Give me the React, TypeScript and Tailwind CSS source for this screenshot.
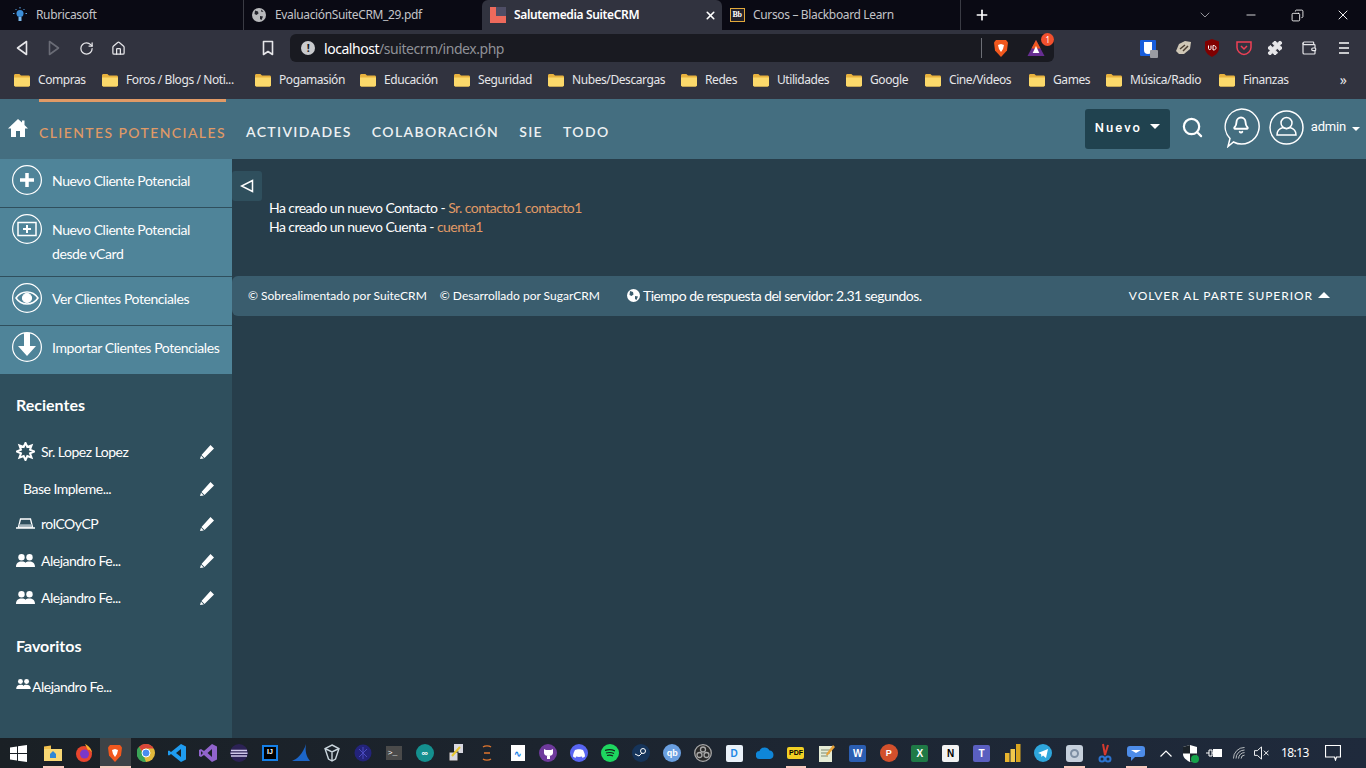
import { ChevronDown, Copy, Home, Minus, Plus, Puzzle, RotateCw, Search, Bell, Wallet, X } from 'lucide-react';
import type { ReactNode } from 'react';

const folder = (
  <svg width="16" height="16" viewBox="0 0 16 16" className="shrink-0">
    <path d="M0 3.500C0 2.700.6 2 1.400 2h4l1.600 1.600h7.600c.8 0 1.400.6 1.400 1.400v8c0 .8-.6 1.400-1.400 1.400H1.400C.6 14.400 0 13.800 0 13z" fill="#e8b23e" />
    <path d="M0 5.500h16v7.500c0 .8-.6 1.400-1.400 1.400H1.400C.6 14.400 0 13.800 0 13z" fill="#fbd96b" />
  </svg>
);

const bookmarks = [
  { name: 'Compras', w: 'w-[88px]' },
  { name: 'Foros / Blogs / Noti...', w: 'w-[153px]' },
  { name: 'Pogamasión', w: 'w-[105px]' },
  { name: 'Educación', w: 'w-[94px]' },
  { name: 'Seguridad', w: 'w-[94px]' },
  { name: 'Nubes/Descargas', w: 'w-[133px]' },
  { name: 'Redes', w: 'w-[72px]' },
  { name: 'Utilidades', w: 'w-[93px]' },
  { name: 'Google', w: 'w-[79px]' },
  { name: 'Cine/Videos', w: 'w-[104px]' },
  { name: 'Games', w: 'w-[77px]' },
  { name: 'Música/Radio', w: 'w-[113px]' },
  { name: 'Finanzas', w: 'w-[100px]' },
];

function Tab({ w, pl, icon, title, active, sep }: { w: string; pl: string; icon: ReactNode; title: string; active?: boolean; sep?: boolean }) {
  return (
    <div className={`${w} ${pl} h-[30px] flex items-center shrink-0 pr-[5px] gap-[8px] text-[12px] tracking-[-0.35px] ${active ? 'bg-[#31333f] rounded-t-[6px] text-white font-semibold' : 'text-[#c3c4c8]'} ${sep ? 'border-r border-[#3a3b44]' : ''}`}>
      <span className="w-[16px] h-[16px] flex items-center justify-center shrink-0">{icon}</span>
      <span className="flex-1 truncate">{title}</span>
      {active && <X size={13} strokeWidth={3} className="text-white" />}
    </div>
  );
}

function TabBar() {
  return (
    <div className="h-[30px] bg-[#0a0a14] flex items-end shrink-0 font-['Noto_Sans',sans-serif]">
      <Tab
        w="w-[244px]"
        pl="pl-[12px]"
        sep
        title="Rubricasoft"
        icon={
          <svg width="16" height="16" viewBox="0 0 16 16">
            <circle cx="8" cy="6.500" r="3.500" fill="#3d8fd8" />
            <rect x="6.500" y="10" width="3" height="4" fill="#7db8ea" />
            <path d="M8 0v1.500M2.500 6.500H1M15 6.500h-1.500M3.500 2l1 1M12.500 2l-1 1" stroke="#5aa5e6" strokeWidth="1" />
          </svg>
        }
      />
      <Tab
        w="w-[238px]"
        pl="pl-[7px]"
        title="EvaluaciónSuiteCRM_29.pdf"
        icon={
          <svg width="14" height="14" viewBox="0 0 14 14">
            <circle cx="7" cy="7" r="7" fill="#b9babd" />
            <path d="M3 2.500l3 1 .5 2-2 1.500-2-1zM8 8l3 .5-1.500 3.500-1.500-1zM9 1.500l2.500 2-2 .5z" fill="#24252d" />
          </svg>
        }
      />
      <Tab
        w="w-[240px]"
        pl="pl-[8px]"
        active
        title="Salutemedia SuiteCRM"
        icon={
          <svg width="16" height="16" viewBox="0 0 16 16">
            <rect width="16" height="16" fill="#ee6a5c" />
            <rect x="6" width="10" height="9" fill="#4f4e66" />
          </svg>
        }
      />
      <Tab
        w="w-[239px]"
        pl="pl-[7px]"
        sep
        title="Cursos – Blackboard Learn"
        icon={
          <span className="w-[15px] h-[14px] border border-[#e2a93b] bg-[#20202a] text-[8px] font-bold leading-[12px] text-center text-white font-['Liberation_Serif',serif]">Bb</span>
        }
      />
      <div className="w-[42px] h-[30px] flex items-center justify-center">
        <Plus size={16} strokeWidth={2.5} className="text-white" />
      </div>
      <div className="flex-1" />
      <div className="flex items-center h-[30px] text-white">
        <div className="w-[46px] flex justify-center"><ChevronDown size={16} strokeWidth={1} className="text-[#d8d8dc]" /></div>
        <div className="w-[46px] flex justify-center"><Minus size={14} strokeWidth={1.4} /></div>
        <div className="w-[46px] flex justify-center"><Copy size={13} strokeWidth={1.6} className="-scale-x-100" /></div>
        <div className="w-[46px] flex justify-center"><X size={16} strokeWidth={1.4} /></div>
      </div>
    </div>
  );
}

function Toolbar() {
  const ic = 'w-[32px] flex justify-center';
  return (
    <div className="h-[34px] bg-[#31333f] flex items-center shrink-0 pl-[6px] pt-[2px] text-[#e6e6e9]">
      <div className={ic}>
        <svg width="14" height="16" viewBox="0 0 14 16" fill="none" stroke="#e6e6e9" strokeWidth="1.600" strokeLinejoin="round"><path d="M11.500 1.500v13L2.500 8z" /></svg>
      </div>
      <div className={ic}>
        <svg width="14" height="16" viewBox="0 0 14 16" fill="none" stroke="#6a6c76" strokeWidth="1.600" strokeLinejoin="round"><path d="M2.500 1.500v13l9-6.500z" /></svg>
      </div>
      <div className={ic}><RotateCw size={15} strokeWidth={2} /></div>
      <div className={ic}><Home size={15} strokeWidth={2} /></div>
      <div className="w-[118px]" />
      <div className="w-[32px] flex justify-center">
        <svg width="12" height="16" viewBox="0 0 12 16" fill="none" stroke="#e6e6e9" strokeWidth="1.600" strokeLinejoin="round"><path d="M1.500 1.500h9v13L6 11.500l-4.500 3z" /></svg>
      </div>
      <div className="w-[6px]" />
      <div className="w-[764px] h-[28px] bg-[#191a21] rounded-[6px] flex items-center pl-[11px] pr-[7px] text-[14px] tracking-[-0.45px] font-['Noto_Sans',sans-serif]">
        <span className="w-[14px] h-[14px] rounded-full bg-[#c9cacd] text-[#191a21] text-[11px] font-bold leading-[14px] text-center mr-[9px]">!</span>
        <span className="text-white">localhost</span>
        <span className="text-[#8f9197]">/suitecrm/index.php</span>
        <div className="flex-1" />
        <div className="w-px h-[20px] bg-[#6d6f76] mr-[11px]" />
        <svg width="16" height="19" viewBox="0 0 16 19" className="mr-[18px]">
          <path d="M3 1h10l2 2.500-1 8-6 6.500-6-6.500-1-8z" fill="#f1581e" />
          <path d="M5 6l3-1 3 1-1 4-2 3-2-3z" fill="#fff" />
        </svg>
        <div className="relative w-[20px] h-[18px]">
          <svg width="18" height="18" viewBox="0 0 18 18">
            <path d="M9 1l8.500 16H.5z" fill="#662d91" />
            <path d="M9 1l4.500 8.500h-9z" fill="#f1581e" />
            <path d="M9 7l3.300 7H5.700z" fill="#fff" />
          </svg>
          <span className="absolute -top-[6px] -right-[7px] w-[13px] h-[13px] rounded-full bg-[#f1502e] text-white text-[8px] leading-[13px] text-center">1</span>
        </div>
      </div>
      <div className="w-[86px]" />
      <div className="flex items-center">
        <div className="relative w-[16px] h-[16px] bg-[#175ddc] rounded-[1px] flex justify-center shrink-0">
          <div className="w-[8px] h-[12px] mt-[2px] bg-white rounded-b-[4px]" />
          <div className="absolute -right-[2px] -bottom-[2px] w-[8px] h-[8px] bg-[#9a9ca2] rounded-[1px]" />
        </div>
        <svg width="18" height="16" viewBox="0 0 18 16" className="ml-[19px] shrink-0"><path d="M1 11l3-7 6-3 6 1-1 7-6 5-5 0z" fill="#cfc7b6" /><path d="M5 9l5-4M8 11l5-5" stroke="#4a3d30" strokeWidth="1.500" /></svg>
        <svg width="16" height="18" viewBox="0 0 16 18" className="ml-[11px] shrink-0"><path d="M8 0l7 2.500v7c0 4-4 7-7 8.500-3-1.500-7-4.500-7-8.500v-7z" fill="#800000" /><path d="M4.500 6.500v3c0 1.500 2.500 1.500 2.500 0v-3M9 6.500v4.500c2.500 0 3-1 3-2.300S11 6.500 9 6.500z" stroke="#fff" fill="none" /></svg>
        <svg width="16" height="16" viewBox="0 0 16 16" fill="none" stroke="#ef4056" strokeWidth="1.500" className="ml-[16px] shrink-0"><path d="M1 2h14v5.500c0 3.500-3.500 7-7 7s-7-3.500-7-7z" /><path d="M5 6l3 3 3-3" /></svg>
        <Puzzle size={16} fill="#e6e6e9" strokeWidth={1.500} className="ml-[15px] shrink-0" />
        <Wallet size={16} strokeWidth={1.800} className="ml-[18px] shrink-0" />
        <div className="ml-[22px] flex flex-col items-center gap-[3px]">
          <div className="w-[10px] h-[2px] bg-[#c9cacd]" />
          <div className="w-[10px] h-[2px] bg-[#c9cacd]" />
          <div className="w-[10px] h-[2px] bg-[#c9cacd]" />
        </div>
      </div>
    </div>
  );
}

function BookmarksBar() {
  return (
    <div className="h-[35px] bg-[#31333f] flex items-center shrink-0 pl-[14px] pb-[3px] text-[12px] text-[#e6e6e9] font-['Noto_Sans',sans-serif]">
      {bookmarks.map((b) => (
        <div key={b.name} className={`${b.w} flex items-center gap-[8px] shrink-0`}>
          {folder}
          <span className="whitespace-nowrap tracking-[-0.42px]">{b.name}</span>
        </div>
      ))}
      <div className="flex-1 text-right pr-[19px] text-[14px] leading-none">»</div>
    </div>
  );
}

function NavBar() {
  const item = "text-[14px] font-semibold tracking-[1.350px] text-[#edf1f3]";
  return (
    <div className="h-[60px] bg-[#446e80] flex items-center shrink-0 font-['Lato',sans-serif] text-white">
      <svg width="20" height="20" viewBox="0 0 20 20" className="ml-[8px] mr-[11px] mt-[-2px] shrink-0" fill="#fff">
        <path d="M10 1L0 10.500h3V19h5v-6h4v6h5v-8.500h3L16.500 7V2.500h-2.500v2z" />
      </svg>
      <div className="relative h-[60px] flex items-center pt-[6px]">
        <div className="absolute top-0 left-0 right-0 h-[3px] bg-[#e09a66]" />
        <span className="text-[14px] font-medium tracking-[1.400px] text-[#e09a66] whitespace-nowrap">CLIENTES POTENCIALES</span>
      </div>
      <div className="flex gap-[20px] ml-[20px] pt-[5px]">
        <span className={item}>ACTIVIDADES</span>
        <span className={item}>COLABORACIÓN</span>
        <span className={item}>SIE</span>
        <span className={item}>TODO</span>
      </div>
      <div className="flex-1" />
      <div className="w-[85px] h-[40px] bg-[#20424f] rounded-[3px] flex items-center justify-center gap-[8px] pb-[2px] font-['Roboto',sans-serif]">
        <span className="text-[13px] tracking-[2px] font-medium">Nuevo</span>
        <span className="w-0 h-0 border-l-[5px] border-r-[5px] border-t-[5px] border-l-transparent border-r-transparent border-t-white mt-[-3px]" />
      </div>
      <Search size={23} strokeWidth={2.300} className="ml-[11px] mr-[19px] mt-[-4px]" />
      <div className="relative w-[37px] h-[40px] mr-[9px] mt-[-2px]">
        <svg width="37" height="40" viewBox="0 0 37 40" fill="none" stroke="#fff" strokeWidth="1.500">
          <path d="M18.500 1a17.500 17.500 0 1 1-8 33L5 38.500l2-8A17.500 17.500 0 0 1 18.500 1z" />
        </svg>
        <Bell size={18} strokeWidth={2.500} className="absolute left-[9px] top-[8px]" />
      </div>
      <svg width="35" height="35" viewBox="0 0 35 35" fill="none" stroke="#fff" strokeWidth="1.500" className="shrink-0 mr-[7px] mt-[-4px]">
        <circle cx="17.500" cy="17.500" r="16.500" />
        <circle cx="17.500" cy="13" r="5.500" />
        <path d="M8 25c0-5 4-7 6-7.500 2 1.500 5 1.500 7 0 2 .5 6 2.500 6 7.500z" />
      </svg>
      <span className="text-[13px] tracking-[-0.2px] mt-[-4px] font-['Roboto',sans-serif]">admin</span>
      <span className="w-0 h-0 ml-[6px] mr-[6px] border-l-[4px] border-r-[4px] border-t-[4px] border-l-transparent border-r-transparent border-t-white" />
    </div>
  );
}

function Round({ children }: { children: ReactNode }) {
  return (
    <svg width="30" height="30" viewBox="0 0 30 30" className="shrink-0" fill="none" stroke="#fff" strokeWidth="1.200">
      <circle cx="15" cy="15" r="14.400" />
      {children}
    </svg>
  );
}

function Action({ icon, lines, h }: { icon: ReactNode; lines: string[]; h: string }) {
  return (
    <div className={`${h} bg-[#4f8499] border-b border-[#2f4f5d] flex items-start pl-[12px] pt-[6px] gap-[10px] shrink-0`}>
      {icon}
      <div className="pt-[4px] text-[14px] leading-[24px] tracking-[-0.42px] text-white whitespace-nowrap">
        {lines.map((l) => <div key={l}>{l}</div>)}
      </div>
    </div>
  );
}

const pencil = (
  <svg width="14" height="14" viewBox="0 0 14 14" fill="#fff" className="shrink-0">
    <path d="M10.500 0L14 3.500 4.500 13 1.500 10zM1 10.800L3.800 13.500 0 14z" />
  </svg>
);

const people = (
  <svg width="19" height="13" viewBox="0 0 19 13" fill="#fff" className="shrink-0">
    <circle cx="5.500" cy="3.300" r="3.200" />
    <circle cx="13.500" cy="3.300" r="3.200" />
    <path d="M0 13c0-4 2.500-5.500 5.500-5.500S9 8 9.500 9c.5-1 1-1.500 4-1.500s5.500 1.500 5.500 5.500z" />
  </svg>
);

function Recent({ icon, label, h, w = 'w-[25px]' }: { icon: ReactNode; label: string; h: string; w?: string }) {
  return (
    <div className={`${h} flex items-center pl-[16px] pr-[18px] text-[14px] tracking-[-0.5px] text-white`}>
      <span className={`${w} shrink-0 flex`}>{icon}</span>
      <span className="flex-1 whitespace-nowrap">{label}</span>
      {pencil}
    </div>
  );
}

function Sidebar() {
  return (
    <aside className="w-[232px] shrink-0 bg-[#2f4f5d] font-['Lato',sans-serif]">
      <Action
        h="h-[49px]"
        lines={['Nuevo Cliente Potencial']}
        icon={<Round><path d="M15 8v14M8 15h14" strokeWidth="3.500" /></Round>}
      />
      <Action
        h="h-[69px]"
        lines={['Nuevo Cliente Potencial', 'desde vCard']}
        icon={<Round><rect x="6" y="8.500" width="18" height="13" strokeWidth="1.500" /><path d="M15 11v8M11 15h8" strokeWidth="2" /></Round>}
      />
      <Action
        h="h-[49px]"
        lines={['Ver Clientes Potenciales']}
        icon={<Round><path d="M4 15c3-4.500 7-6 11-6s8 1.500 11 6c-3 4.500-7 6-11 6s-8-1.500-11-6z" strokeWidth="1.500" /><circle cx="15" cy="15" r="4.500" fill="#fff" /></Round>}
      />
      <Action
        h="h-[49px]"
        lines={['Importar Clientes Potenciales']}
        icon={<Round><path d="M12 1h6v13h6l-9 10-9-10h6z" fill="#fff" stroke="none" /></Round>}
      />
      <h3 className="pl-[16px] pt-[20px] text-[16px] font-bold leading-[20px] text-white">Recientes</h3>
      <div className="mt-[18px]">
        <Recent
          h="h-[37px]"
          label="Sr. Lopez Lopez"
          icon={
            <svg width="19" height="19" viewBox="-1 -1 21 21" fill="none" stroke="#fff" strokeWidth="2.200" strokeLinejoin="miter">
              <path d="M19 9.500L14.500 11.500 16.200 16.200 11.500 14.500 9.500 19 7.500 14.500 2.800 16.200 4.500 11.500 0 9.500 4.500 7.500 2.800 2.800 7.500 4.500 9.500 0 11.500 4.500 16.200 2.800 14.500 7.500z" />
            </svg>
          }
        />
        <Recent h="h-[37px]" w="w-[7px]" label="Base Impleme..." icon={null} />
        <Recent
          h="h-[35px] pb-[2px]"
          label="rolCOyCP"
          icon={
            <svg width="19" height="11" viewBox="0 0 19 11" fill="none" stroke="#fff" strokeWidth="1.300">
              <path d="M4.500 1h10l2 8h-14z" />
              <path d="M3 7.500h13" stroke="#9fb1b9" strokeWidth="2.500" />
              <path d="M0 10h19" strokeWidth="1.500" />
            </svg>
          }
        />
        <Recent h="h-[37px]" label="Alejandro Fe..." icon={people} />
        <Recent h="h-[37px]" label="Alejandro Fe..." icon={people} />
      </div>
      <h3 className="pl-[16px] pt-[20px] text-[16px] font-bold leading-[20px] text-white">Favoritos</h3>
      <div className="pl-[16px] mt-[20px] flex items-center gap-[1px] text-[14px] tracking-[-0.5px] text-white">
        <svg width="15" height="10" viewBox="0 0 19 13" fill="#fff" className="shrink-0 mt-[-5px]">
          <circle cx="5.500" cy="3.300" r="3.200" />
          <circle cx="13.500" cy="3.300" r="3.200" />
          <path d="M0 13c0-4 2.500-5.500 5.500-5.500S9 8 9.500 9c.5-1 1-1.500 4-1.500s5.500 1.500 5.500 5.500z" />
        </svg>
        <span>Alejandro Fe...</span>
      </div>
    </aside>
  );
}

function Content() {
  return (
    <main className="flex-1 bg-[#273e4b] font-['Lato',sans-serif] text-white min-w-0">
      <div className="w-[30px] h-[30px] mt-[12px] bg-[#2f4f5d] rounded-[3px] flex items-center justify-center">
        <svg width="14" height="14" viewBox="0 0 14 14" fill="none" stroke="#fff" strokeWidth="1.500"><path d="M12.500 1.500v11L1.500 7z" /></svg>
      </div>
      <div className="pl-[37px] mt-[-3px] text-[14px] leading-[19px] tracking-[-0.55px] h-[78px]">
        <div>Ha creado un nuevo Contacto - <span className="text-[#e09a66]">Sr. contacto1 contacto1</span></div>
        <div>Ha creado un nuevo Cuenta - <span className="text-[#e09a66]">cuenta1</span></div>
      </div>
      <footer className="h-[40px] bg-[#3a5d6e] rounded-l-[6px] flex items-center pl-[16px] pr-[36px]">
        <span className="text-[12px]">© Sobrealimentado por SuiteCRM</span>
        <span className="text-[12px] ml-[13px]">© Desarrollado por SugarCRM</span>
        <svg width="13" height="13" viewBox="0 0 13 13" className="ml-[27px] mb-[2px] shrink-0">
          <circle cx="6.500" cy="6.500" r="6.500" fill="#fff" />
          <path d="M3 2l3 1 .5 2.500-2 1.500-2-1zM8 7l3 .5-1.500 3.500-1.500-1z" fill="#3a5d6e" />
        </svg>
        <span className="text-[14px] ml-[3px] mb-[2px] tracking-[-0.52px]">Tiempo de respuesta del servidor: 2.31 segundos.</span>
        <div className="flex-1" />
        <span className="text-[12px] tracking-[0.950px]">VOLVER AL PARTE SUPERIOR</span>
        <span className="w-0 h-0 ml-[5px] border-l-[6px] border-r-[6px] border-b-[6px] border-l-transparent border-r-transparent border-b-white mt-[-2px]" />
      </footer>
    </main>
  );
}

function Letter({ bg, fg = 'text-white', children }: { bg: string; fg?: string; children: ReactNode }) {
  return <span className={`w-[17px] h-[17px] rounded-[2px] ${bg} ${fg} text-[10px] font-bold leading-[17px] text-center font-['Liberation_Sans',sans-serif]`}>{children}</span>;
}

function Dot({ bg, children }: { bg: string; children?: ReactNode }) {
  return <span className={`w-[18px] h-[18px] rounded-full ${bg} text-white text-[9px] font-bold leading-[18px] text-center font-['Liberation_Sans',sans-serif]`}>{children}</span>;
}

// taskbar icons, about 31px apart, left to right
const apps: { icon: ReactNode; on?: boolean; active?: boolean }[] = [
  { on: true, icon: <svg width="18" height="16" viewBox="0 0 18 16"><path d="M0 1.500L7 .5V7H0z" fill="#f2c14e" /><path d="M0 4h18v12H0z" fill="#f7d774" /><path d="M6 9l3-3 3 3v4H6z" fill="#2d86d6" /></svg> },
  { icon: <svg width="18" height="18" viewBox="0 0 18 18"><circle cx="9" cy="10" r="8" fill="#e8452e" /><circle cx="9.500" cy="10" r="4.500" fill="#7a38c9" /><path d="M10 0c4 2 7 5 7 10 0-3-3-5-4-4z" fill="#ffb02e" /></svg> },
  { on: true, active: true, icon: <svg width="16" height="19" viewBox="0 0 16 19"><path d="M3 1h10l2 2.500-1 8-6 6.500-6-6.500-1-8z" fill="#f1581e" /><path d="M5 6l3-1 3 1-1 4-2 3-2-3z" fill="#fff" /></svg> },
  { icon: <svg width="18" height="18" viewBox="0 0 18 18"><circle cx="9" cy="9" r="9" fill="#e2b93b" /><path d="M9 0a9 9 0 0 1 7.800 4.500H9A4.500 4.500 0 0 0 4.800 7.500L2 2.800A9 9 0 0 1 9 0z" fill="#d9463a" /><path d="M2 2.800L6 10l3 8A9 9 0 0 1 2 2.800z" fill="#3aa457" /><circle cx="9" cy="9" r="4" fill="#4a8df0" stroke="#fff" /></svg> },
  { icon: <svg width="18" height="18" viewBox="0 0 18 18"><path d="M13 0l5 2.500v13L13 18 3 10l-2 1.500L0 11V7l1-.5L3 8z" fill="#1f9cf0" /><path d="M13 5L8 9l5 4z" fill="#1b2126" /></svg> },
  { icon: <svg width="18" height="18" viewBox="0 0 18 18"><path d="M13 0l5 2.500v13L13 18 5 11l-3 2-2-1V6l2-1 3 2z" fill="#9164cc" /><path d="M13 5L8.500 9l4.500 4zM2 7v4l2-2z" fill="#1b2126" /></svg> },
  { icon: <svg width="18" height="18" viewBox="0 0 18 18"><circle cx="9" cy="9" r="9" fill="#2c2255" /><path d="M1 6.500h16M.5 9.200h17M1 12h16" stroke="#d0c8ea" strokeWidth="1.400" /></svg> },
  { icon: <span className="w-[16px] h-[16px] bg-black border-2 border-[#1580e8] text-white text-[7px] font-bold leading-[10px] text-center font-['Liberation_Sans',sans-serif]">IJ</span> },
  { icon: <svg width="20" height="18" viewBox="0 0 20 18"><path d="M1 17C6 15 12 10 15 0c-1 7 0 12 4 17z" fill="#1c66c8" /></svg> },
  { icon: <svg width="16" height="18" viewBox="0 0 16 18" fill="none" stroke="#c9d4dc" strokeWidth="1.400"><path d="M8 1l7 3.500L11.500 15 8 17l-3.500-2L1 4.500zM1 4.500L8 8l7-3.500M8 8v9" /></svg> },
  { icon: <svg width="18" height="18" viewBox="0 0 18 18"><circle cx="9" cy="9" r="8.500" fill="#23237a" /><path d="M5 5l8 8M13 5l-8 8M9 3v12" stroke="#4a4ac0" /></svg> },
  { icon: <span className="w-[16px] h-[14px] bg-[#4a4a4a] flex items-center pl-[2px] text-white text-[8px] leading-none font-['Liberation_Mono',monospace]">&gt;_</span> },
  { icon: <Dot bg="bg-[#14908f]">∞</Dot> },
  { icon: <svg width="14" height="18" viewBox="0 0 14 18"><rect x="5" y="0" width="9" height="9" fill="#d8d8e0" /><rect x="0" y="8" width="9" height="9" fill="#d8d8e0" stroke="#222" /><path d="M3 12L11 3" stroke="#e6c62e" strokeWidth="2" /></svg> },
  { icon: <svg width="16" height="18" viewBox="0 0 16 18" fill="none" stroke="#e0762e" strokeWidth="1.400"><path d="M4 3c2-1.500 6-1.500 8 0M4 15c2 1.500 6 1.500 8 0M5 9h6" /></svg> },
  { icon: <span className="w-[14px] h-[16px] bg-white flex items-center justify-center text-[#1580e8] text-[9px] font-bold leading-none">∿</span> },
  { icon: <Dot bg="bg-[#6e3a9c]"><svg width="11" height="11" viewBox="0 0 11 11" className="m-auto mt-[3.500px]"><path d="M1 1l2 1h5l2-1v4c0 2-2 3-4.500 3S1 7 1 5zM4 8v3h3V8z" fill="#fff" /></svg></Dot> },
  { icon: <Dot bg="bg-[#5865f2]"><svg width="12" height="9" viewBox="0 0 12 9" className="m-auto mt-[4.500px]"><path d="M2 1c2-1 6-1 8 0 1 2 2 4 2 6.500L9.500 9 9 7.500c-2 .5-4 .5-6 0L2.500 9 0 7.500C0 5 1 3 2 1z" fill="#fff" /></svg></Dot> },
  { icon: <Dot bg="bg-[#1ed760]"><svg width="10" height="8" viewBox="0 0 10 8" fill="none" stroke="#14231a" strokeWidth="1.200" className="m-auto mt-[5px]"><path d="M0 1.500c3-1 7-1 10 .5M1 4c2.500-.7 5.500-.7 8 .5M2 6.500c2-.5 4-.5 6 .5" /></svg></Dot> },
  { icon: <Dot bg="bg-[#16345a]"><svg width="12" height="12" viewBox="0 0 12 12" className="m-auto mt-[3px]"><circle cx="8" cy="4" r="2.500" fill="none" stroke="#fff" /><path d="M0 7l4 2 3-3" stroke="#fff" fill="none" /></svg></Dot> },
  { icon: <Dot bg="bg-[#6a9fe0]">qb</Dot> },
  { icon: <svg width="18" height="18" viewBox="0 0 18 18" fill="none" stroke="#a8a8a8" strokeWidth="1.300"><circle cx="9" cy="9" r="8.300" fill="#2a2a2a" /><circle cx="9" cy="5.500" r="2.500" /><circle cx="5.500" cy="11" r="2.500" /><circle cx="12.500" cy="11" r="2.500" /></svg> },
  { icon: <Letter bg="bg-[#eaf2fa]" fg="text-[#1e88e5]">D</Letter> },
  { icon: <svg width="18" height="12" viewBox="0 0 18 12"><path d="M4 12a4 4 0 0 1-.5-8 5.500 5.500 0 0 1 10-.5A4.300 4.300 0 0 1 14 12z" fill="#0f86d8" /></svg> },
  { on: true, icon: <span className="w-[17px] h-[12px] rounded-[2px] bg-[#f2d024] text-black text-[7px] font-bold leading-[12px] text-center font-['Liberation_Sans',sans-serif]">PDF</span> },
  { icon: <svg width="18" height="18" viewBox="0 0 18 18"><rect x="1" y="2" width="13" height="16" fill="#e6ecd6" /><path d="M3 6h9M3 9h9M3 12h7" stroke="#7d8a72" /><path d="M15 1l2 2-7 8-2 .5.500-2z" fill="#e8a33a" /></svg> },
  { icon: <Letter bg="bg-[#2b5eb2]">W</Letter> },
  { icon: <Dot bg="bg-[#d2502c]">P</Dot> },
  { icon: <Letter bg="bg-[#1f7a46]">X</Letter> },
  { icon: <Letter bg="bg-[#f3f3f3]" fg="text-black">N</Letter> },
  { icon: <Letter bg="bg-[#5a5fc0]">T</Letter> },
  { icon: <svg width="16" height="18" viewBox="0 0 16 18"><rect x="0" y="9" width="4.500" height="9" fill="#e8b42e" /><rect x="5.500" y="5" width="4.500" height="13" fill="#f2c94c" /><rect x="11" y="0" width="4.500" height="18" fill="#d9a520" /></svg> },
  { icon: <Dot bg="bg-[#2ea6dc]"><svg width="10" height="9" viewBox="0 0 10 9" className="m-auto mt-[5px]"><path d="M0 4l10-4-2 9-3-2.500L3.500 8l-.5-3z" fill="#fff" /></svg></Dot> },
  { on: true, icon: <span className="w-[17px] h-[17px] rounded-[3px] bg-[#c6d0dc] flex items-center justify-center"><span className="w-[9px] h-[9px] rounded-full border-2 border-[#7d8ea3]" /></span> },
  { icon: <svg width="16" height="20" viewBox="0 0 16 20" fill="none" stroke="#d63a2e" strokeWidth="2"><path d="M6 1l2 11M11 2L8 12" /><circle cx="5" cy="16" r="2.500" stroke="#2c74d0" /><circle cx="11" cy="16" r="2.500" stroke="#2c74d0" /></svg> },
  { on: true, icon: <svg width="18" height="16" viewBox="0 0 18 16"><path d="M3 1h12a3 3 0 0 1 3 3v5a3 3 0 0 1-3 3H8l-4 4v-4H3a3 3 0 0 1-3-3V4a3 3 0 0 1 3-3z" fill="#4d8ce8" /><path d="M4 5h10l-5 3z" fill="#fff" /></svg> },
];

function Taskbar() {
  return (
    <div className="h-[30px] bg-linear-to-r from-[#1a2025] to-[#1f2a3c] flex items-center shrink-0 text-white">
      <div className="w-[38px] pl-[10px]">
        <svg width="17" height="17" viewBox="0 0 17 17" fill="#fff"><path d="M0 2.400L7 1.400V8H0zM8 1.300L17 0v8H8zM0 9h7v6.600l-7-1zM8 9h9v8l-9-1.300z" /></svg>
      </div>
      {apps.map((a, i) => (
        <div key={i} className={`relative w-[30.950px] h-[30px] flex items-center justify-center shrink-0 ${a.active ? 'bg-[#3d4347]' : ''}`}>
          {a.icon}
          {a.on && <div className={`absolute bottom-0 h-[2px] bg-[#f6c9bd] ${a.active ? 'left-0 right-0' : 'left-[5px] right-[5px]'}`} />}
        </div>
      ))}
      <div className="flex-1" />
      <svg width="12" height="7" viewBox="0 0 12 7" fill="none" stroke="#fff" strokeWidth="1.200" className="mr-[10px]"><path d="M.5 6.500L6 1l5.500 5.500" /></svg>
      <div className="relative mr-[8px] w-[16px] flex justify-center">
        <svg width="14" height="17" viewBox="0 0 14 17"><path d="M7 0l7 2v7c0 4-4 6.500-7 8-3-1.500-7-4-7-8V2z" fill="#fff" /><path d="M7 0v8.500H0V2zM7 8.500h7c0 4-4 6.500-7 8.500z" fill="#1b2228" /></svg>
        <span className="absolute -right-[1px] -bottom-[1px] w-[8px] h-[8px] rounded-full bg-[#16a34a]" />
      </div>
      <svg width="16" height="12" viewBox="0 0 16 12" fill="none" stroke="#fff" className="mr-[11px]"><path d="M0 6h3M3 3h3v6H3zM6 6h1" /><rect x="7.500" y="2.500" width="8" height="7" fill="#fff" /></svg>
      <svg width="12" height="12" viewBox="0 0 14 14" fill="none" stroke="#cfd2d4" className="mr-[9px]"><path d="M.5 13.500a13 13 0 0 1 13-13M3.500 13.500a10 10 0 0 1 10-10M6.500 13.500a7 7 0 0 1 7-7M9.500 13.500a4 4 0 0 1 4-4" /></svg>
      <svg width="15" height="14" viewBox="0 0 16 14" fill="none" stroke="#fff" className="mr-[12px]"><path d="M.5 4.500h3L8 .5v13l-4.500-4h-3zM10.500 4.500l5 5M15.500 4.500l-5 5" /></svg>
      <span className="w-[26px] text-center text-[12px] tracking-[-0.6px] whitespace-nowrap font-['Noto_Sans',sans-serif]">18:13</span>
      <svg width="16" height="16" viewBox="0 0 16 16" fill="none" stroke="#fff" strokeWidth="1.200" className="ml-[18px] mr-[25px]"><path d="M.5.500h15v11.500h-4l-1 3-1-3h-9z" /></svg>
    </div>
  );
}

export default function App() {
  return (
    <div className="w-[1366px] h-[768px] flex flex-col overflow-hidden bg-[#273e4b]">
      <TabBar />
      <Toolbar />
      <BookmarksBar />
      <NavBar />
      <div className="flex-1 flex min-h-0">
        <Sidebar />
        <Content />
      </div>
      <Taskbar />
    </div>
  );
}
